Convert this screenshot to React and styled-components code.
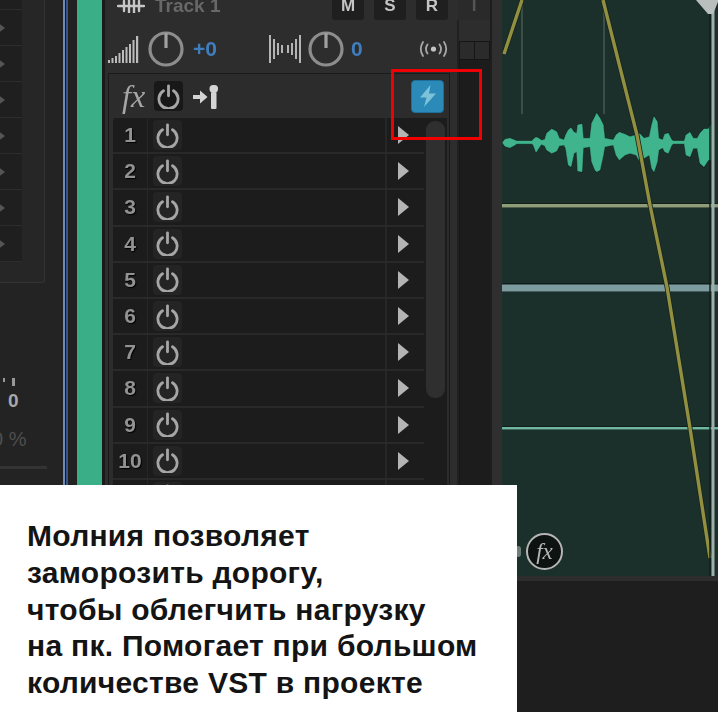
import React from 'react'
import styled, { createGlobalStyle } from 'styled-components'

const Global = createGlobalStyle`
  html, body {
    margin: 0;
    padding: 0;
    background: #1e1e1e;
    overflow: hidden;
  }
`

const waveData = [
  [8,112,114],[15,103,124],[30,100,128],[45,106,120],[50,108,116],[96,108,116],[100,103,120],[108,97,142],
  [116,100,130],[124,106,118],[134,104,122],[140,85,135],[155,72,145],[170,80,138],[178,100,122],[192,105,120],
  [197,90,130],[205,75,180],[213,68,185],[222,82,145],[230,85,140],[233,60,198],[246,57,200],[250,100,128],
  [270,100,125],[275,55,170],[285,35,195],[290,25,200],[300,40,195],[310,60,150],[314,100,125],[340,105,120],
  [348,90,150],[358,82,165],[375,88,150],[390,95,145],[408,90,150],[420,86,170],[432,100,160],[448,95,150],
  [455,60,190],[462,35,200],[472,50,170],[476,100,135],[488,105,128],[494,88,140],[505,85,145],[515,105,120],
  [520,108,116],[553,108,116],[558,90,150],[570,82,155],[580,100,130],[592,100,130],[600,85,175],[612,72,185],
  [625,72,165],[632,60,165],
]

// crop coordinates back to page coordinates
const wavePath = () => {
  const px = (z) => (500 + z / 3).toFixed(1)
  const py = (z) => (105 + z / 3).toFixed(1)
  const top = waveData.map(([x, t]) => `${px(x)},${py(t)}`)
  const bottom = [...waveData].reverse().map(([x, , b]) => `${px(x)},${py(b)}`)
  return `M${top.join(' L')} L${bottom.join(' L')} Z`
}

const PowerIcon = ({ size = 25 }) => (
  <svg width={size} height={size} viewBox="0 0 25 25" fill="none" stroke="#a6a6a6" strokeWidth="2.8" strokeLinecap="round">
    <path d="M7.5 6.8a9.6 9.6 0 1 0 10 0" />
    <path d="M12.5 1.8v10" />
  </svg>
)

const Knob = () => (
  <svg width="36" height="36" viewBox="0 0 36 36" fill="none" stroke="#8d8d8d" strokeWidth="3.2">
    <circle cx="18" cy="18" r="16" />
    <path d="M18 2v15" stroke="#a0a0a0" />
  </svg>
)

const VolumeIcon = () => (
  <svg width="31" height="29" viewBox="0 0 31 29" fill="#bcbcbc">
    <rect x="0" y="25" width="2" height="3" /><rect x="3.5" y="23" width="2" height="5" />
    <rect x="7" y="21" width="2" height="7" /><rect x="10.5" y="18" width="2" height="10" />
    <rect x="14" y="15" width="2" height="13" /><rect x="17.5" y="12" width="2" height="16" />
    <rect x="21" y="9" width="2" height="19" /><rect x="24.5" y="5" width="2" height="23" />
    <rect x="28" y="1" width="2.2" height="27" />
  </svg>
)

const PanIcon = () => (
  <svg width="32" height="28" viewBox="0 0 32 28" fill="#b4b4b4">
    <rect x="0" y="0" width="2" height="28" /><rect x="4" y="4" width="2" height="20" />
    <rect x="8" y="8" width="2" height="12" /><rect x="12" y="10" width="2" height="8" />
    <rect x="18" y="10" width="2" height="8" /><rect x="22" y="8" width="2" height="12" />
    <rect x="26" y="4" width="2" height="20" /><rect x="30" y="0" width="2" height="28" />
  </svg>
)

const RadioIcon = () => (
  <svg width="31" height="16" viewBox="0 0 31 16" fill="none" stroke="#a8a8a8" strokeWidth="1.8" strokeLinecap="round">
    <circle cx="15.5" cy="8" r="2.6" fill="#c4c4c4" stroke="none" />
    <path d="M9.5 3.5a8 8 0 0 0 0 9M5 1a13 13 0 0 0 0 14M21.5 3.5a8 8 0 0 1 0 9M26 1a13 13 0 0 1 0 14" />
  </svg>
)

const TrackIcon = () => (
  <svg width="28" height="14" viewBox="0 0 28 14" fill="none" stroke="#c6c6c6" strokeWidth="2.4" strokeLinecap="round">
    <path d="M1 7h26M7 2v10M12 0v14M17 0v14M22 2v10" />
  </svg>
)

const SendIcon = () => (
  <svg width="26" height="25" viewBox="0 0 26 25" fill="#d4d4d4">
    <path d="M0 11h7V6.5l7.5 6.5L7 19.5V15H0z" />
    <rect x="18" y="8" width="5.5" height="17" rx="1" />
    <rect x="16.5" y="1" width="8.5" height="7.5" rx="3.5" />
  </svg>
)

const BoltIcon = () => (
  <svg width="20" height="22" viewBox="0 0 20 22" fill="#7cc2d8">
    <path d="M12.5 0 2 12.5h6.5L6 22 18 8.5h-7z" />
  </svg>
)

const Page = styled.div`
  position: relative;
  width: 718px;
  height: 712px;
  overflow: hidden;
  background: #1e1e1e;
  font-family: "Liberation Sans", Arial, sans-serif;
`

const Screen = styled.div`
  display: flex;
  height: 712px;
  filter: blur(0.7px);
`

const LeftPanel = styled.div`
  width: 63px;
  flex: none;
  height: 100%;
  background: #232323;
  overflow: hidden;
`

const EffectList = styled.div`
  width: 45px;
  height: 309px;
  margin-top: -26px;
  background: #262626;
  border-right: 1px solid #333;
  border-bottom: 1px solid #333;
  border-bottom-right-radius: 3px;
  box-sizing: border-box;
`

const ListRow = styled.div`
  display: flex;
  align-items: center;
  width: 22px;
  height: 36px;
  box-sizing: border-box;
  background: #1f1f1f;
  border-bottom: 1px solid #2c2c2c;
`

const ListArrow = styled.div`
  width: 0;
  height: 0;
  margin-left: -6px;
  border-left: 11px solid #555;
  border-top: 8px solid transparent;
  border-bottom: 8px solid transparent;
`

const TickRow = styled.div`
  display: flex;
  gap: 7px;
  margin: 95px 0 0 3px;
`

const Tick = styled.div`
  width: ${(p) => p.$w}px;
  height: ${(p) => p.$h}px;
  background: #999;
`

const ZeroValue = styled.div`
  margin: 4px 0 0 8px;
  font-size: 19px;
  font-weight: 700;
  line-height: 22px;
  color: #a8a8a8;
`

const Percent = styled.div`
  margin: 16px 0 0 -8px;
  font-size: 20px;
  line-height: 22px;
  color: #4e4e4e;
  white-space: nowrap;
`

const FooterLine = styled.div`
  width: 47px;
  height: 3px;
  margin-top: 16px;
  background: #333;
`

const BlueLines = styled.div`
  width: 5px;
  flex: none;
  background: linear-gradient(90deg, #6d8db8 0 2px, #0f1a33 2px 3px, #3a5688 3px 5px);
`

const Gutter = styled.div`
  width: 9px;
  flex: none;
  background: #222;
`

const TrackColor = styled.div`
  width: 25px;
  flex: none;
  background: #3aae87;
`

const TrackEdge = styled.div`
  width: 3px;
  flex: none;
  background: #1a1a1a;
`

const TrackPanel = styled.div`
  display: flex;
  flex-direction: column;
  width: 385px;
  flex: none;
  background: #2d2d2d;
`

const TopRow = styled.div`
  display: flex;
  align-items: center;
  flex: none;
  height: 28px;
  margin-top: -8px;
`

const TrackIconSlot = styled.div`
  display: flex;
  margin-left: 12px;
`

const TrackName = styled.div`
  flex: 1;
  margin-left: 10px;
  font-size: 19px;
  font-weight: 700;
  color: #686868;
`

const ToggleRow = styled.div`
  display: flex;
  gap: 10px;
`

const Toggle = styled.div`
  display: flex;
  align-items: center;
  justify-content: center;
  width: 32px;
  height: 28px;
  border-radius: 3px;
  background: ${(p) => (p.$off ? '#2a2a2a' : '#1f1f1f')};
  color: ${(p) => (p.$off ? '#555' : '#c4c4c4')};
  font-size: 17px;
  font-weight: 700;
`

const TrackBody = styled.div`
  display: flex;
  flex: 1;
  min-height: 0;
`

const MainColumn = styled.div`
  width: 354px;
  flex: none;
  box-sizing: border-box;
  border-right: 2px solid #202020;
`

const KnobRow = styled.div`
  display: flex;
  align-items: center;
  height: 36px;
  margin: 11px 0 6px 3px;
`

const KnobGroup = styled.div`
  display: flex;
  align-items: center;
  width: ${(p) => p.$w}px;
  gap: ${(p) => p.$gap}px;
`

const KnobValue = styled.div`
  font-size: 21px;
  font-weight: 700;
  color: #3f7dbd;
`

const Rack = styled.div`
  width: 342px;
  margin-left: 3px;
  box-sizing: border-box;
  border: 1px solid #1a1a1a;
  border-bottom: 0;
  background: #2c2c2c;
`

const RackHeader = styled.div`
  display: flex;
  align-items: center;
  height: 44px;
  padding-left: 13px;
`

const FxLabel = styled.div`
  width: 32px;
  font-family: "Liberation Serif", serif;
  font-size: 32px;
  font-style: italic;
  line-height: 32px;
  color: #a6a6a6;
`

const PowerButton = styled.div`
  display: flex;
  align-items: center;
  justify-content: center;
  width: 29px;
  height: 30px;
  border-radius: 4px;
  background: ${(p) => (p.$header ? '#181818' : '#242424')};
`

const SendSlot = styled.div`
  display: flex;
  margin-left: 10px;
`

const BoltButton = styled.div`
  display: flex;
  align-items: center;
  justify-content: center;
  width: 33px;
  height: 33px;
  margin: 0 5px 0 auto;
  box-sizing: border-box;
  border: 1px solid #1d6f99;
  border-radius: 4px;
  background: #2b8ab8;
`

const RackBody = styled.div`
  display: flex;
  margin: 0 2px 0 4px;
  background: #1c1c1c;
  border-top-left-radius: 3px;
`

const Slots = styled.div`
  width: 311px;
  flex: none;
`

const Slot = styled.div`
  display: flex;
  align-items: center;
  height: 36.2px;
  box-sizing: border-box;
  border-bottom: 2px solid #292929;
`

const SlotNumber = styled.div`
  width: 35px;
  height: 100%;
  box-sizing: border-box;
  border-right: 1px solid #262626;
  display: flex;
  align-items: center;
  justify-content: center;
  font-size: 21px;
  font-weight: 700;
  color: #929292;
  text-shadow: 1px 1px 1px #000;
`

const SlotPower = styled.div`
  margin-left: 5px;
`

const SlotName = styled.div`
  flex: 1;
  height: 100%;
  margin-left: 3px;
  box-sizing: border-box;
  border-right: 2px solid #262626;
`

const SlotArrow = styled.div`
  width: 0;
  height: 0;
  margin: 0 15px 0 11px;
  border-left: 11px solid #b4b4b4;
  border-top: 9px solid transparent;
  border-bottom: 9px solid transparent;
`

const ScrollLane = styled.div`
  flex: 1;
  padding: 3px 2px 0;
`

const ScrollThumb = styled.div`
  height: 277px;
  border-radius: 9px;
  background: #2f2f2f;
`

const Meter = styled.div`
  flex: 1;
  display: flex;
  flex-direction: column;
  margin-top: 21px;
  background: #1c1c1c;
  border-left: 1px solid #171717;
`

const MeterHead = styled.div`
  display: grid;
  grid-template-columns: 1fr 1fr;
  height: 17px;
  background: #2b2b2b;
  border-top: 1px solid #151515;
  border-bottom: 1px solid #151515;
`

const MeterCell = styled.div`
  border-right: 1px solid #151515;
`

const Rail = styled.div`
  width: 12px;
  flex: none;
  box-sizing: border-box;
  background: #2f2f2f;
  border-left: 2px solid #1d1d1d;
`

const ClipColumn = styled.div`
  width: 216px;
  flex: none;
`

const Clip = styled.div`
  position: relative;
  height: 581px;
  box-sizing: border-box;
  background: #1b302a;
  border-bottom: 5px solid #2d2d2d;
`

const ClipArt = styled.svg`
  display: block;
`

const FxBadge = styled.div`
  position: absolute;
  left: 24px;
  top: 533px;
  display: flex;
  align-items: center;
  justify-content: center;
  width: 37px;
  height: 37px;
  box-sizing: border-box;
  border: 2px solid #b5b5b5;
  border-radius: 50%;
  background: #0d1311;
  font-family: "Liberation Serif", serif;
  font-size: 23px;
  font-style: italic;
  color: #b8b8b8;
`

const BadgeScrap = styled.div`
  position: absolute;
  left: 13px;
  top: 546px;
  width: 6px;
  height: 11px;
  border-radius: 3px;
  background: #6f7f78;
`

const RedFrame = styled.div`
  position: absolute;
  left: 391px;
  top: 69px;
  width: 91px;
  height: 71px;
  box-sizing: border-box;
  border: 3px solid #f00000;
`

const Caption = styled.div`
  position: absolute;
  left: 0;
  top: 485px;
  width: 517px;
  height: 227px;
  box-sizing: border-box;
  padding: 33px 0 0 27px;
  background: #fff;
  color: #141414;
  font-size: 30px;
  font-weight: 700;
  line-height: 36.8px;
  letter-spacing: 0.28px;
  white-space: nowrap;
`

const App = () => {
  const leftRows = [0, 1, 2, 3, 4, 5, 6, 7]
  const slots = [1, 2, 3, 4, 5, 6, 7, 8, 9, 10, 11]
  return (
    <Page>
      <Global />
      <Screen>
        <LeftPanel>
          <EffectList>
            {leftRows.map((r) => (
              <ListRow key={r}><ListArrow /></ListRow>
            ))}
          </EffectList>
          <TickRow>
            <Tick $w={2} $h={4} />
            <Tick $w={3} $h={8} />
          </TickRow>
          <ZeroValue>0</ZeroValue>
          <Percent>0 %</Percent>
          <FooterLine />
        </LeftPanel>
        <BlueLines />
        <Gutter />
        <TrackColor />
        <TrackEdge />
        <TrackPanel>
          <TopRow>
            <TrackIconSlot><TrackIcon /></TrackIconSlot>
            <TrackName>Track 1</TrackName>
            <ToggleRow>
              <Toggle>M</Toggle>
              <Toggle>S</Toggle>
              <Toggle>R</Toggle>
              <Toggle $off>I</Toggle>
            </ToggleRow>
          </TopRow>
          <TrackBody>
            <MainColumn>
              <KnobRow>
                <KnobGroup $w={161} $gap={9}>
                  <VolumeIcon />
                  <Knob />
                  <KnobValue>+0</KnobValue>
                </KnobGroup>
                <KnobGroup $w={149} $gap={7}>
                  <PanIcon />
                  <Knob />
                  <KnobValue>0</KnobValue>
                </KnobGroup>
                <RadioIcon />
              </KnobRow>
              <Rack>
                <RackHeader>
                  <FxLabel>fx</FxLabel>
                  <PowerButton $header><PowerIcon /></PowerButton>
                  <SendSlot><SendIcon /></SendSlot>
                  <BoltButton><BoltIcon /></BoltButton>
                </RackHeader>
                <RackBody>
                  <Slots>
                    {slots.map((n) => (
                      <Slot key={n}>
                        <SlotNumber>{n}</SlotNumber>
                        <SlotPower><PowerButton><PowerIcon /></PowerButton></SlotPower>
                        <SlotName />
                        <SlotArrow />
                      </Slot>
                    ))}
                  </Slots>
                  <ScrollLane><ScrollThumb /></ScrollLane>
                </RackBody>
              </Rack>
            </MainColumn>
            <Meter>
              <MeterHead>
                <MeterCell />
                <MeterCell />
              </MeterHead>
            </Meter>
          </TrackBody>
        </TrackPanel>
        <Rail />
        <ClipColumn>
          <Clip>
            <ClipArt width="216" height="576" viewBox="502 0 216 576">
              <path d="M522 0V114M604 0V114" stroke="#47574f" strokeWidth="1.5" />
              <rect x="502" y="203" width="216" height="5" fill="#111d19" />
              <rect x="502" y="204" width="216" height="3.5" fill="#8f9c78" />
              <rect x="502" y="283" width="216" height="9" fill="#111d19" />
              <rect x="502" y="284.5" width="216" height="7" fill="#7d9ca0" />
              <rect x="502" y="426" width="216" height="4" fill="#111d19" />
              <rect x="502" y="427" width="216" height="2.5" fill="#6fb79e" />
              <path d={wavePath()} fill="none" stroke="#12201b" strokeWidth="1.6" />
              <path d={wavePath()} fill="#3fb48d" stroke="#3fb48d" strokeWidth="0.5" />
              <path d="M504 54L522 0M603 0L637 135L650 205L667 287L690 428L710 558" fill="none" stroke="#16261e" strokeWidth="5" />
              <path d="M504 54L522 0M603 0L637 135L650 205L667 287L690 428L710 558" fill="none" stroke="#929040" strokeWidth="3.4" />
              <path d="M710 0V576" stroke="#10201b" strokeWidth="1.5" />
              <path d="M713 0V576" stroke="#9fb0ab" strokeWidth="3" />
              <path d="M696 0H718V2L713 14L708 14Z" fill="#b9bfbd" />
            </ClipArt>
            <BadgeScrap />
            <FxBadge>fx</FxBadge>
          </Clip>
        </ClipColumn>
      </Screen>
      <RedFrame />
      <Caption>
        Молния позволяет<br />
        заморозить дорогу,<br />
        чтобы облегчить нагрузку<br />
        на пк. Помогает при большом<br />
        количестве VST в проекте
      </Caption>
    </Page>
  )
}

export default App
